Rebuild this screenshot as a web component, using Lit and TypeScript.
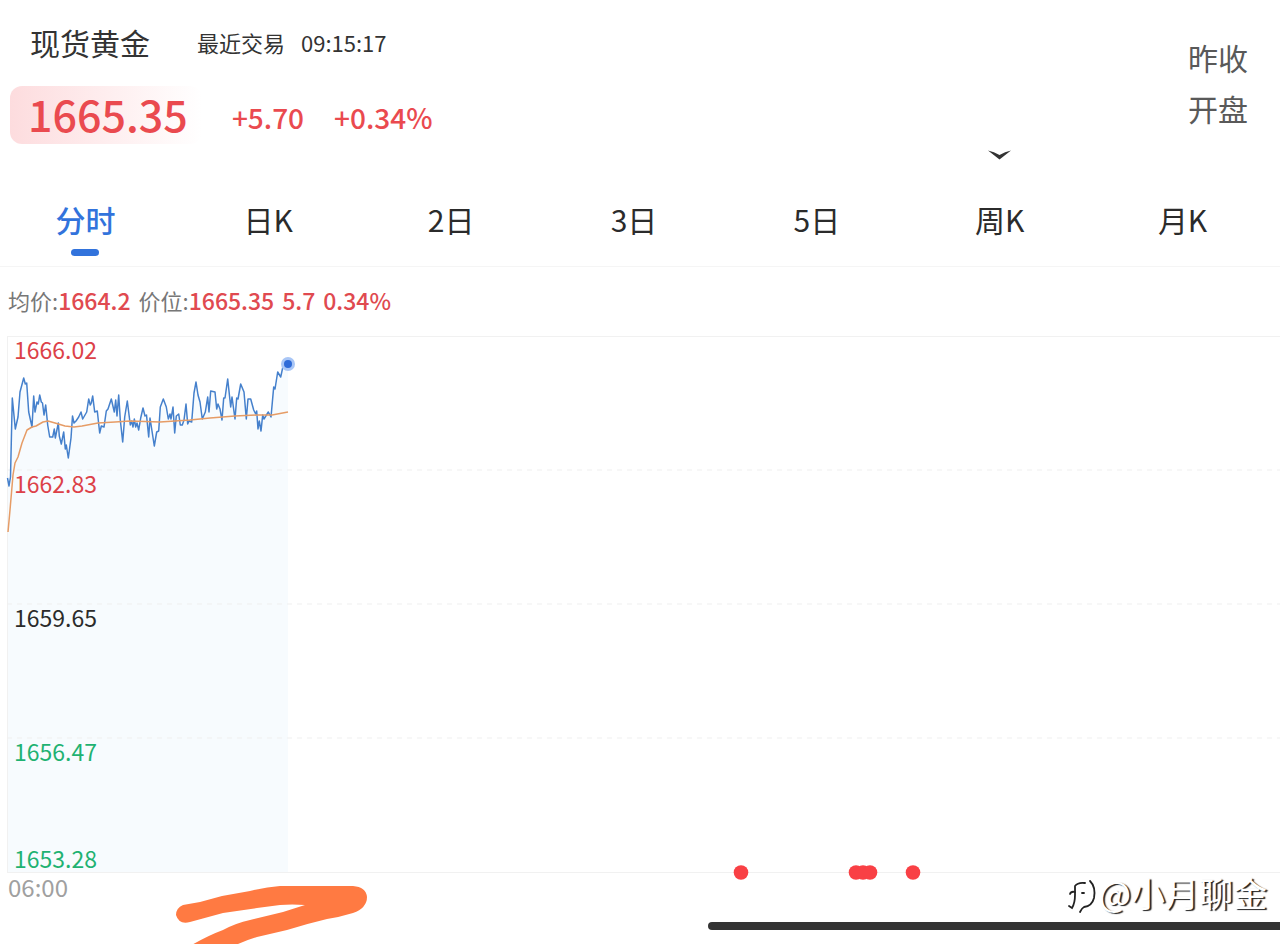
import { LitElement, html, svg, css } from "lit";
import { customElement, state } from "lit/decorators.js";
import { classMap } from "lit/directives/class-map.js";

const PERIODS = ["分时", "日K", "2日", "3日", "5日", "周K", "月K"];

const SCALE = [
  { value: "1666.02", tone: "up" },
  { value: "1662.83", tone: "up" },
  { value: "1659.65", tone: "flat" },
  { value: "1656.47", tone: "down" },
  { value: "1653.28", tone: "down" },
];

const PRICE =
  "7.5,142 9,150 10.5,141 12.3,62 15.3,93 18,81 20,56 23.7,42 25.3,48 26.7,47 28.7,76 32,91 33.7,60 35,76 37,66 38.3,68 39.7,59 41.3,66 42.5,67 44,79 45.7,69 47.7,89 49.7,101 52.7,101 54.3,93 55.3,102 58.3,87 59.3,100 61.3,108 63.7,96 65.3,113 66.3,109 68.3,122 71,102 72.5,80 74,87 76,85 78.7,81 81,76 82.7,83 86.7,76 88.7,63 90.3,69 91.3,67 92.7,60 94.7,76 97.3,75 99.7,97 101.3,90 104,91 106.3,75 108,73 111.3,63 114.3,76 115.7,64 117,80 118.7,59 120.3,84 122.7,106 124.7,81 127.3,65 130.3,89 131.7,85 133,91 134.3,83 135.7,91 137,87 138.7,94 140.7,82 143,72 145,80 146.5,79 148.7,101 150,82 154.3,110 156.7,96 158.7,95 160.3,71 163.3,63 166.3,71 168.3,83 170,78 171,83 173,71 174.7,97 176.3,80 178.7,78 180.3,89 182.3,89 184,84 186,68 187.7,88 189,85 191.7,86 194,57 196,46 198,59 200,66 202.3,83 205.3,76 207.7,61 209,76 210.7,55 215,56 216.7,73 218,68 220,73 222,84 223.7,62 225,62 227.7,43 230.7,71 232,61 235,83 236.7,62 238,63 240.7,48 244,56 246.3,83 248,63 250.7,63 253.7,74 255.7,78 256.7,75 258,93 259.3,85 261,95 262.7,79 264,83 268.3,76 271,81 273.7,51 275,53 277.7,36 280.7,41 283.3,29 285.7,31 286.7,23 288,28";

const AVERAGE =
  "8,196 10,174 13,139 15,127 18,121 22,107 27,94 32,91 36,90 43,86 48,85 55,87 65,90 74,91 82,90 98,87 115,86 130,85 160,86 190,84 210,82 235,80 258,79 272,79 288,76";

const EVENTS = [741, 856, 863, 870, 913];

@customElement("price-chart")
class PriceChart extends LitElement {
  static styles = css`
    :host {
      display: grid;
      grid-template: 536px / 1fr;
    }
    .plot,
    .scale {
      grid-area: 1 / 1;
    }
    .plot {
      width: 100%;
      height: 100%;
      overflow: visible;
    }
    .frame {
      stroke: #f1f1f1;
      stroke-width: 1;
    }
    .dash {
      stroke: #efefef;
      stroke-dasharray: 5 5;
    }
    .area {
      fill: #f7fbfe;
    }
    .price,
    .average {
      fill: none;
      stroke-width: 1.5;
      stroke-linejoin: round;
    }
    .price {
      stroke: #4580cc;
    }
    .average {
      stroke: #e69c66;
    }
    .halo {
      fill: #a9c6f6;
    }
    .now {
      fill: #2f6bd8;
    }
    .event {
      fill: #f94045;
    }
    .scale {
      display: grid;
      grid-template-rows: repeat(3, 1fr) 107px 27px;
      padding-left: 14px;
      font-size: 23px;
      line-height: 27px;
      z-index: 1;
    }
    .up {
      color: #dc4148;
    }
    .flat {
      color: #2b2b2b;
    }
    .down {
      color: #1fb272;
    }
  `;

  render() {
    return html`
      <svg class="plot" aria-label="分时走势">
        <polygon class="area" points="7,536 ${PRICE} 288,536" />
        <line class="frame" x1="7" x2="100%" y1="0.5" y2="0.5" />
        <line class="frame" x1="7.5" x2="7.5" y1="0" y2="536" />
        <line class="frame" x1="7" x2="100%" y1="536.5" y2="536.5" />
        ${[134, 268, 402].map(
          (y) => svg`<line class="dash" x1="7" x2="100%" y1=${y} y2=${y} />`
        )}
        <polyline class="price" points=${PRICE} />
        <polyline class="average" points=${AVERAGE} />
        <circle class="halo" cx="288" cy="28" r="7" />
        <circle class="now" cx="288" cy="28" r="4" />
        ${EVENTS.map((x) => svg`<circle class="event" cx=${x} cy="536.5" r="7.3" />`)}
      </svg>
      <div class="scale">
        ${SCALE.map((s) => html`<span class=${s.tone}>${s.value}</span>`)}
      </div>
    `;
  }
}

@customElement("app-root")
class AppRoot extends LitElement {
  @state() period = "分时";

  static styles = css`
    :host {
      display: flex;
      flex-direction: column;
      min-height: 100vh;
      background: #fff;
      color: #333;
      font-family: "Noto Sans CJK SC", sans-serif;
    }
    button {
      border: 0;
      padding: 0;
      background: none;
      color: inherit;
      font: inherit;
      cursor: pointer;
    }
    .header {
      display: flex;
      justify-content: space-between;
      padding: 20px 32px 0 10px;
    }
    .heading {
      display: flex;
      align-items: center;
      padding-left: 20px;
      line-height: 44px;
    }
    .name {
      margin: 0 47px 0 0;
      font-size: 30px;
      font-weight: 400;
    }
    .trade {
      display: flex;
      gap: 16px;
      font-size: 22px;
    }
    .quote {
      display: flex;
      align-items: center;
      gap: 30px;
      margin-top: 22px;
      color: #ea4a4f;
      font-size: 28px;
      font-weight: 500;
      line-height: 54px;
    }
    .change {
      padding-top: 4px;
    }
    .last {
      padding: 0 14px 4px 18px;
      border-radius: 12px;
      background: linear-gradient(90deg, #fddcde, #fff);
      font-size: 43px;
    }
    .side {
      display: flex;
      gap: 177px;
    }
    .more {
      align-self: end;
      display: flex;
      width: 23px;
      height: 12px;
      margin-bottom: 6px;
    }
    .facts {
      margin: 0;
      padding: 12px 0 33px;
      color: #595959;
      font-size: 30px;
      line-height: 51px;
    }
    .facts dt {
      margin: 0;
    }
    .tabs {
      display: grid;
      grid-template-columns: repeat(7, 1fr);
      margin-top: 30px;
      border-bottom: 1px solid #f5f5f5;
      color: #2b2b2b;
      font-size: 30px;
    }
    .tabs .tab {
      display: flex;
      flex-direction: column;
      align-items: center;
      gap: 8px;
      padding: 0 12px 10px 0;
      line-height: 44px;
    }
    .tab::after {
      content: "";
      width: 28px;
      height: 7px;
      border-radius: 4px;
    }
    .tabs .active {
      color: #3273dc;
      font-weight: 500;
    }
    .active::after {
      background: #3273dc;
    }
    .summary {
      display: flex;
      gap: 8px;
      margin: 0;
      padding: 16px 8px 18px;
      color: #777;
      font-size: 22px;
      line-height: 35px;
    }
    .value {
      color: #e04a50;
      font-size: 23px;
      font-weight: 500;
    }
    .footer {
      position: relative;
      flex: 1;
      min-height: 71px;
      padding-left: 8px;
      color: #a0a0a0;
      font-size: 24px;
      line-height: 30px;
    }
    .stroke {
      position: absolute;
      left: 170px;
      top: 10px;
      fill: #ff7a42;
    }
    .credit {
      position: absolute;
      right: 13px;
      top: 0;
      display: flex;
      align-items: center;
      color: #fff;
      font-size: 34px;
      line-height: 40px;
      text-shadow: 2px 1px 1px #222;
    }
    .logo {
      fill: none;
      stroke: #222;
      stroke-width: 1.8;
      stroke-linecap: round;
    }
    .homebar {
      position: absolute;
      left: 708px;
      right: 0;
      bottom: 14px;
      height: 8px;
      border-radius: 4px 0 0 4px;
      background: #333;
    }
  `;

  render() {
    return html`
      <header class="header">
        <div>
          <div class="heading">
            <h1 class="name">现货黄金</h1>
            <div class="trade"><span>最近交易</span><time>09:15:17</time></div>
          </div>
          <div class="quote">
            <span class="last">1665.35</span>
            <span class="change">+5.70</span>
            <span class="change">+0.34%</span>
          </div>
        </div>
        <div class="side">
          <button class="more" aria-label="展开">
            <svg width="23" height="12" viewBox="0 0 23 12">
              <path d="M0 1.5Q6 2.5 11.5 6Q17 2.5 23 1.5L11.5 10.5Z" fill="#333" />
            </svg>
          </button>
          <dl class="facts">
            <dt>昨收</dt>
            <dt>开盘</dt>
          </dl>
        </div>
      </header>
      <nav class="tabs" role="tablist">
        ${PERIODS.map(
          (p) => html`<button
            role="tab"
            aria-selected=${p === this.period}
            class=${classMap({ tab: true, active: p === this.period })}
            @click=${() => (this.period = p)}
          >${p}</button>`
        )}
      </nav>
      <div class="summary">
        <span>均价:<span class="value">1664.2</span></span>
        <span>价位:<span class="value">1665.35</span></span>
        <span class="value">5.7</span>
        <span class="value">0.34%</span>
      </div>
      <price-chart></price-chart>
      <footer class="footer">
        <time>06:00</time>
        <svg class="stroke" width="200" height="62" viewBox="170 882 200 62">
          <path d="M183 905L200 902L222 896L250 891Q266 887 280 886H353Q366 887 367 897Q367 908 353 913Q340 917 327 919Q306 924 287 930L257 937Q240 942 222 952H180Q204 937 223 930Q236 923 250 920L283 912L305 905Q292 904 280 905L257 908L223 913L190 922Q179 925 176 915Q176 908 183 905Z" />
        </svg>
        <div class="credit">
          <svg class="logo" width="32" height="42" viewBox="0 0 32 42">
            <path d="M8 14Q11 10 18 11" />
            <path d="M23 9Q29 15 27 26Q25 34 17 35Q15 36 13 40" />
            <path d="M3 22Q4 19 8 20" />
            <path d="M8 15V23Q8 31 5 36L2 34" />
            <path d="M15 21H17" />
          </svg>
          <span>@小月聊金</span>
        </div>
        <div class="homebar"></div>
      </footer>
    `;
  }
}
